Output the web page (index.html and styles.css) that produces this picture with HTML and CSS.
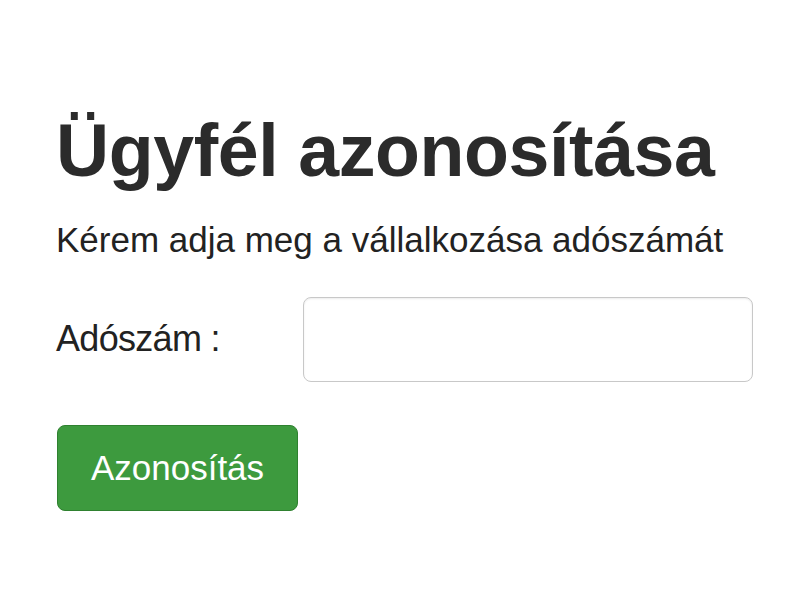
FILE: index.html
```html
<!DOCTYPE html>
<html lang="hu">
<head>
  <meta charset="UTF-8" />
  <meta name="viewport" content="width=device-width, initial-scale=1.0" />
  <title>Ügyfél azonosítása</title>
  <link rel="stylesheet" href="styles.css">
</head>
<body>
  <div class="container">
    <h1>Ügyfél azonosítása</h1>
    <p class="lead">Kérem adja meg a vállalkozása adószámát</p>

    <form class="login-form" onsubmit="return false;">
      <div class="form-row">
        <label for="adoszam">Adószám :</label>
        <input type="text" id="adoszam" name="adoszam" />
      </div>
      <button type="submit" class="btn-success">Azonosítás</button>
    </form>
  </div>
</body>
</html>
```

FILE: styles.css
```css
html, body {
  margin: 0;
  padding: 0;
  background: #fff;
  color: #333;
  font-family: 'Liberation Sans', Arial, sans-serif;
}

.container {
  padding: 111px 52px 0 56px;
}

h1 {
  margin: 0;
  font-size: 73.5px;
  font-weight: 700;
  letter-spacing: -0.4px;
  line-height: 1.1;
  color: #2b2b2b;
}

.lead {
  margin: 27px 0 0 0;
  font-size: 35px;
  line-height: 1.2;
  color: #222;
}

.form-row {
  display: flex;
  align-items: center;
  margin-top: 36px;
}

.form-row label {
  width: 247px;
  flex-shrink: 0;
  font-size: 36px;
  letter-spacing: -0.7px;
  color: #222;
}

.form-row input {
  width: 450px;
  height: 85px;
  box-sizing: border-box;
  border: 1px solid #c8c8c8;
  border-radius: 8px;
  box-shadow: inset 0 1px 2px rgba(0, 0, 0, 0.08);
  font-size: 30px;
  padding: 0 16px;
}

.btn-success {
  display: block;
  margin-top: 43px;
  margin-left: 1px;
  width: 241px;
  height: 86px;
  border: 1px solid #2f8130;
  border-radius: 8px;
  background-color: #3d9a3e;
  color: #fff;
  font-family: 'Liberation Sans', Arial, sans-serif;
  font-size: 35px;
  cursor: pointer;
}
```
